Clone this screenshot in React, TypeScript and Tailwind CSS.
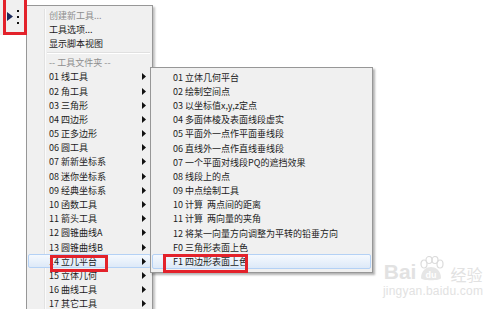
import React from 'react';

type Row = { label: string; arrow?: boolean; disabled?: boolean; active?: boolean };

const topRows: Row[] = [
  { label: '创建新工具...', disabled: true },
  { label: '工具选项...' },
  { label: '显示脚本视图' },
];

const folders: string[] = [
  '01 线工具',
  '02 角工具',
  '03 三角形',
  '04 四边形',
  '05 正多边形',
  '06 圆工具',
  '07 新新坐标系',
  '08 迷你坐标系',
  '09 经典坐标系',
  '10 函数工具',
  '11 箭头工具',
  '12 圆锥曲线A',
  '13 圆锥曲线B',
  '14 立几平台',
  '15 立体几何',
  '16 曲线工具',
  '17 其它工具',
];

const subItems: string[] = [
  '01 立体几何平台',
  '02 绘制空间点',
  '03 以坐标值x,y,z定点',
  '04 多面体棱及表面线段虚实',
  '05 平面外一点作平面垂线段',
  '06 直线外一点作直线垂线段',
  '07 一个平面对线段PQ的遮挡效果',
  '08 线段上的点',
  '09 中点绘制工具',
  '10 计算  两点间的距离',
  '11 计算  两向量的夹角',
  '12 将某一向量方向调整为平转的铅垂方向',
  'F0 三角形表面上色',
  'F1 四边形表面上色',
];

const Arrow = () => (
  <svg width="4" height="7" viewBox="0 0 4 7" className="shrink-0">
    <path d="M0 0 L4 3.5 L0 7 Z" fill="#111" />
  </svg>
);

const MenuRow: React.FC<Row> = ({ label, arrow, disabled, active }) => (
  <div
    className={
      'h-[14.2px] flex items-center justify-between pl-[20px] pr-[4px] mx-[1px] rounded-[2px] border ' +
      (active
        ? 'border-[#b4d1f5] bg-gradient-to-b from-[#f5f9fe] to-[#dde9f8]'
        : 'border-transparent')
    }
  >
    <span className={'whitespace-pre ' + (disabled ? 'text-[#8e8e8e]' : 'text-[#1c1c1c]')}>{label}</span>
    {arrow && <Arrow />}
  </div>
);

const App: React.FC = () => {
  return (
    <div className="relative w-[500px] h-[309px] overflow-hidden bg-white flex items-start font-['Noto_Sans_CJK_SC','Liberation_Sans',sans-serif] text-[9px] leading-none">
      {/* toolbar button */}
      <div className="w-[26px] h-[35px] bg-[#f0f0f0] flex items-center justify-center gap-[4px] pb-[2px]">
        <svg width="6" height="9" viewBox="0 0 6 9">
          <path d="M0 0 L6 4.5 L0 9 Z" fill="#1d2b5c" />
        </svg>
        <div className="flex flex-col gap-[4px]">
          <div className="w-[2px] h-[2px] bg-[#111]" />
          <div className="w-[2px] h-[2px] bg-[#111]" />
          <div className="w-[2px] h-[2px] bg-[#111]" />
        </div>
      </div>

      {/* main menu */}
      <div className="relative mt-[5px] w-[127px] h-[320px] bg-[#f0f0f0] border border-[#979797] pt-[2px] shadow-[2px_2px_2px_rgba(0,0,0,0.25)]">
        <div className="absolute left-[17px] top-[3px] bottom-0 w-[2px] border-l border-[#e2e2e2] bg-white/70" />
        <div className="relative">
          {topRows.map((r) => (
            <MenuRow key={r.label} {...r} />
          ))}
          <div className="h-[5px] flex items-center pl-[20px] pr-[2px]">
            <div className="w-full h-[2px] border-t border-[#e0e0e0] bg-white" />
          </div>
          <MenuRow label="-- 工具文件夹 --" disabled />
          {folders.map((f) => (
            <MenuRow key={f} label={f} arrow active={f.startsWith('14')} />
          ))}
        </div>
      </div>

      {/* submenu */}
      <div className="absolute left-[150px] top-[67px] w-[223px] bg-[#f0f0f0] border border-[#979797] pt-[2px] pb-[3px] shadow-[2px_2px_2px_rgba(0,0,0,0.3)]">
        {subItems.map((s) => (
          <MenuRow key={s} label={s} active={s.startsWith('F1')} />
        ))}
      </div>

      {/* red annotation boxes */}
      <div className="absolute left-[3px] -top-[3px] w-[24px] h-[38px] border-[3px] border-[#e3222b]" />
      <div className="absolute left-[50px] top-[255px] w-[58px] h-[17px] border-[3px] border-[#e3222b]" />
      <div className="absolute left-[163px] top-[254px] w-[85px] h-[19px] border-[3px] border-[#e3222b]" />

      {/* watermark */}
      <div className="absolute left-[383px] top-[256px] flex flex-col items-center text-[#e2e2e2] font-['Liberation_Sans',sans-serif]">
        <div className="flex items-end gap-[2px]">
          <span className="text-[21px] font-bold leading-none">Bai</span>
          <svg width="26" height="26" viewBox="0 0 26 26">
            <ellipse cx="6" cy="8" rx="3" ry="4" fill="none" stroke="#dcdcdc" strokeWidth="1.2" />
            <ellipse cx="11" cy="4" rx="3" ry="3.5" fill="none" stroke="#dcdcdc" strokeWidth="1.2" />
            <ellipse cx="17" cy="4" rx="3" ry="3.5" fill="none" stroke="#dcdcdc" strokeWidth="1.2" />
            <ellipse cx="22" cy="8" rx="3" ry="4" fill="none" stroke="#dcdcdc" strokeWidth="1.2" />
            <path d="M3 22 C3 14 9 11 13 11 C17 11 23 14 23 22 C23 25 3 25 3 22 Z" fill="#e6e6e6" />
            <text x="13" y="22" textAnchor="middle" fontSize="9" fontWeight="bold" fill="#fff" fontFamily="Liberation Sans">du</text>
          </svg>
          <span className="ml-[4px] text-[16px] leading-none font-['Noto_Sans_CJK_SC',sans-serif]">经验</span>
        </div>
        <span className="mt-[3px] text-[12px] leading-none tracking-[0.2px]">jingyan.baidu.com</span>
      </div>
    </div>
  );
};

export default App;
